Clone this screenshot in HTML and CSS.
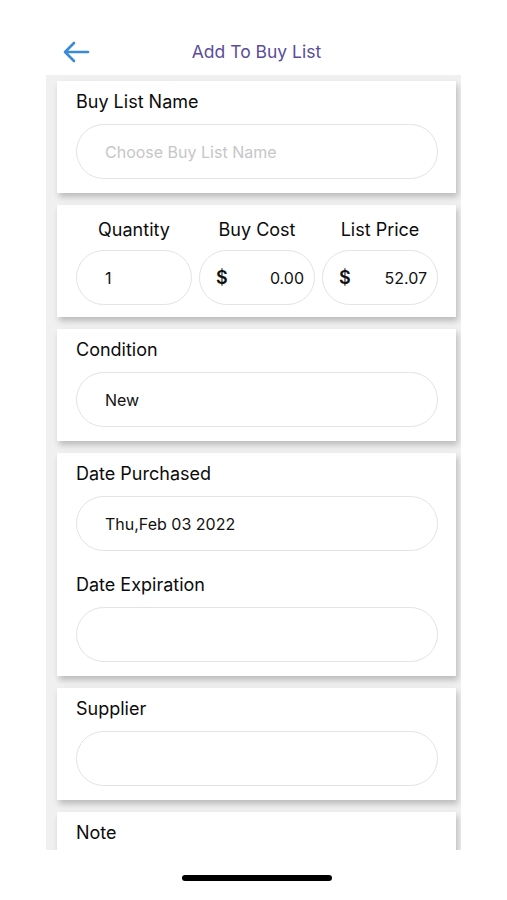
FILE: index.html
```html
<!DOCTYPE html>
<html lang="en">
<head>
    <meta charset="UTF-8">
    <meta name="viewport" content="width=device-width, initial-scale=1.0">
    <title>Add To Buy List</title>
    <link rel="stylesheet" href="styles.css">
</head>
<body>
    <header class="top-bar">
        <span class="back">
            <svg width="28" height="22" viewBox="0 0 28 22">
                <path d="M26 11H3M12 2L3 11l9 9" fill="none" stroke="#3a8ad8" stroke-width="2.6" stroke-linecap="round" stroke-linejoin="round"/>
            </svg>
        </span>
        <h1 class="title">Add To Buy List</h1>
    </header>

    <main class="scroll">
        <section class="card">
            <div class="label">Buy List Name</div>
            <div class="field placeholder">Choose Buy List Name</div>
        </section>

        <section class="card card-prices">
            <div class="col">
                <div class="label">Quantity</div>
                <div class="field">1</div>
            </div>
            <div class="col">
                <div class="label">Buy Cost</div>
                <div class="field money"><span class="dollar">$</span><span>0.00</span></div>
            </div>
            <div class="col">
                <div class="label">List Price</div>
                <div class="field money"><span class="dollar">$</span><span>52.07</span></div>
            </div>
        </section>

        <section class="card">
            <div class="label">Condition</div>
            <div class="field">New</div>
        </section>

        <section class="card">
            <div class="label">Date Purchased</div>
            <div class="field">Thu,Feb 03 2022</div>
            <div class="label second">Date Expiration</div>
            <div class="field"></div>
        </section>

        <section class="card">
            <div class="label">Supplier</div>
            <div class="field"></div>
        </section>

        <section class="card">
            <div class="label">Note</div>
            <div class="field"></div>
        </section>
    </main>

    <div class="home-bar"></div>
</body>
</html>
```

FILE: styles.css
```css
body {
    margin: 0;
    background: #fff;
    font-family: Inter, "Noto Sans", sans-serif;
    color: #111;
}
.top-bar {
    position: relative;
    height: 75px;
    display: flex;
    align-items: center;
    justify-content: center;
    padding-top: 3px;
    padding-left: 6px;
    box-sizing: border-box;
}
.back {
    position: absolute;
    left: 62px;
    top: 41px;
    display: flex;
}
.title {
    margin: 0;
    margin-top: 25px;
    font-size: 17.5px;
    font-weight: 400;
    color: #5c4d98;
}
.scroll {
    margin-left: 46px;
    width: 415px;
    height: 775px;
    overflow: hidden;
    background: #f0f0f0;
    padding: 6px 5px 0 11px;
    box-sizing: border-box;
}
.card {
    background: #fff;
    margin-bottom: 12px;
    padding: 10px 18px 14px 19px;
    box-shadow: 2px 4px 6px rgba(0, 0, 0, 0.22);
}
.label {
    font-size: 18px;
    line-height: 22px;
    margin-bottom: 11px;
    color: #0c0c0c;
}
.label.second {
    margin-top: 23px;
}
.field {
    height: 55px;
    box-sizing: border-box;
    border: 1px solid #e3e3e3;
    border-radius: 28px;
    padding: 0 12px 0 28px;
    display: flex;
    align-items: center;
    font-size: 16px;
}
.placeholder {
    color: #c6c6c8;
}
.card-prices {
    display: flex;
    gap: 7px;
    padding-top: 14px;
    padding-bottom: 12px;
}
.col {
    flex: 1;
}
.col .label {
    text-align: center;
    margin-bottom: 9px;
}
.money {
    justify-content: space-between;
    padding: 0 10px 0 16px;
}
.dollar {
    font-size: 18px;
    font-weight: 600;
}
.home-bar {
    width: 150px;
    height: 6px;
    border-radius: 3px;
    background: #000;
    margin: 25px 0 0 182px;
}
```
